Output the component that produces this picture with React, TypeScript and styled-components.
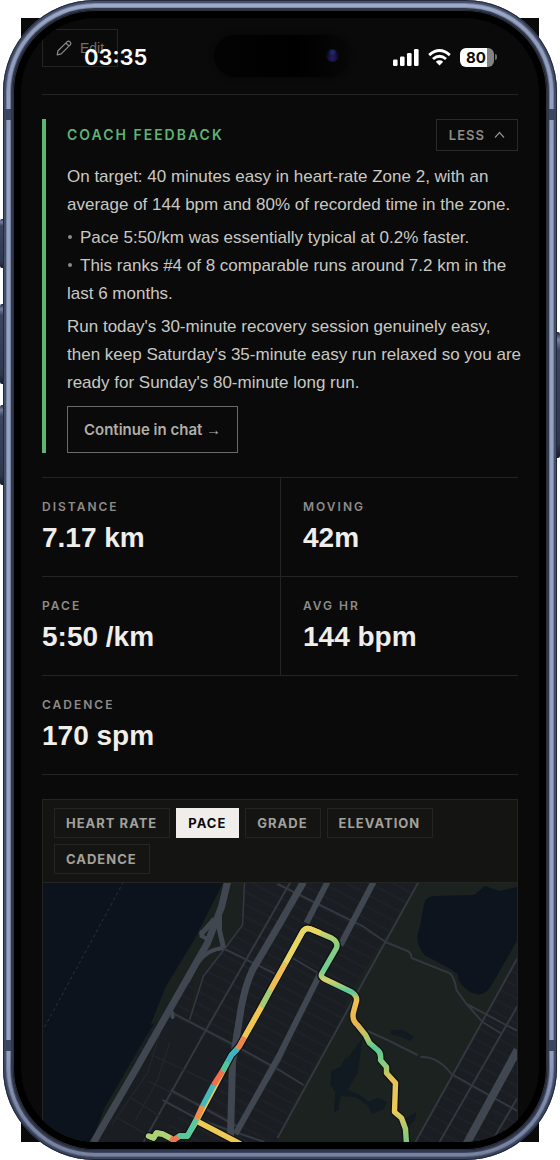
import React from "react";
import styled, { createGlobalStyle } from "styled-components";

const GlobalStyle = createGlobalStyle`
  *, *::before, *::after { box-sizing: border-box; }
  body {
    margin: 0;
    background: #ffffff;
    font-family: "Liberation Sans", Arial, sans-serif;
    -webkit-font-smoothing: antialiased;
  }
  button { font-family: inherit; cursor: pointer; }
  h2, p, ul, dl, dd { margin: 0; padding: 0; }
`;

const LABEL_FONT = `Inter, "Liberation Sans", sans-serif`;

const Stage = styled.div`
  position: relative;
  isolation: isolate;
  padding: 0 3px;

  &::before {
    content: "";
    position: absolute;
    z-index: -1;
    inset: 18px 21px;
    background: #0a0a0a;
  }
`;

const SideKey = styled.span<{ $side: "left" | "right"; $top: number; $length: number }>`
  position: absolute;
  z-index: -1;
  ${({ $side }) => $side}: 0;
  top: ${({ $top }) => $top}px;
  height: ${({ $length }) => $length}px;
  width: 6px;
  border-radius: 2px;
  background: linear-gradient(#20283a, #76819f 6%, #3a4560 14%, #2f394e 88%, #161c2a);
`;

const Device = styled.div`
  position: relative;
  padding: 10px;
  border-radius: 92px;
  background: linear-gradient(#8792b3, #6c7794 3%, #74809f 12%, #74809f 90%, #424c68 96%, #3d4660);
  box-shadow:
    inset 0 0 0 1px rgba(20, 26, 42, 0.7),
    inset 0 0 0 3px rgba(34, 43, 68, 0.6),
    inset 0 0 0 4px rgba(50, 60, 86, 0.3),
    inset 0 0 0 7px rgba(190, 203, 232, 0.45);
`;

const Bezel = styled.div`
  padding: 8px;
  border-radius: 82px;
  background: #000000;
  box-shadow:
    0 0 0 2px #30384f,
    inset 0 0 0 1px #2f3036;
`;

const AntennaBand = styled.span<{ $side: "left" | "right"; $end: "top" | "bottom" }>`
  position: absolute;
  ${({ $side }) => $side}: 1px;
  ${({ $end }) => $end}: 109px;
  width: 7px;
  height: 11px;
  background: #3c465f;
`;

const Screen = styled.main`
  position: relative;
  overflow: hidden;
  border-radius: 74px;
  background: #0a0a0a;
  padding: 11px 21px 0;
`;

const StatusBar = styled.header`
  position: absolute;
  inset: 0 0 auto 0;
  display: flex;
  align-items: center;
  justify-content: space-between;
  height: 78px;
  padding: 0 42px 0 63px;
  color: #ffffff;
`;

const Clock = styled.time`
  font-family: ${LABEL_FONT};
  font-size: 22px;
  font-weight: 600;
  line-height: 28px;
`;

const Island = styled.div`
  position: absolute;
  top: 17px;
  left: 50%;
  width: 136px;
  height: 42px;
  margin-left: -66px;
  border-radius: 21px;
  background: linear-gradient(90deg, #030303 10%, #000000 60%, #070708);
  box-shadow: 0 0 5px #070707;
`;

const Lens = styled.span`
  position: absolute;
  top: 14px;
  right: 11px;
  width: 13px;
  height: 13px;
  border-radius: 50%;
  background: radial-gradient(circle at 50% 25%, #1d2b66 0 10%, transparent 40%),
    radial-gradient(circle at 50% 70%, #26185c 0 12%, #0b0a22 55%, #050508);
`;

const Indicators = styled.div`
  display: flex;
  align-items: center;
  gap: 9px;
`;

const Battery = styled.span`
  display: flex;
  align-items: center;
  gap: 1px;

  &::after {
    content: "";
    width: 2px;
    height: 6px;
    border-radius: 0 2px 2px 0;
    background: #6c6c6c;
  }
`;

const BatteryLevel = styled.span`
  width: 34px;
  height: 19px;
  padding-right: 2px;
  border-radius: 6px;
  background: linear-gradient(90deg, #ffffff 80%, #828282 80%);
  color: #0a0a0a;
  font-family: ${LABEL_FONT};
  font-size: 15px;
  font-weight: 700;
  line-height: 19px;
  text-align: center;
`;

const Toolbar = styled.div`
  padding-bottom: 27px;
  border-bottom: 1px solid #242422;
`;

const EditButton = styled.button`
  display: flex;
  align-items: center;
  gap: 8px;
  height: 38px;
  padding: 0 13px;
  border: 1px solid #242422;
  background: transparent;
  color: #6f6f6c;
  font-size: 14px;
`;

const Coach = styled.section`
  margin: 24px 0;
  padding-left: 21px;
  border-left: 4px solid #5cb575;
  color: #c9c8c3;
  font-size: 17px;
  line-height: 28px;
`;

const CoachHeader = styled.div`
  display: flex;
  align-items: center;
  justify-content: space-between;
  margin-bottom: 12px;
`;

const CoachTitle = styled.h2`
  color: #5cb575;
  font-family: ${LABEL_FONT};
  font-size: 14px;
  font-weight: 600;
  line-height: 20px;
  letter-spacing: 2px;
`;

const LessButton = styled.button`
  display: flex;
  align-items: center;
  gap: 9px;
  height: 32px;
  padding: 0 12px;
  border: 1px solid #2a2a28;
  background: transparent;
  color: #8d8c88;
  font-family: ${LABEL_FONT};
  font-size: 13px;
  font-weight: 600;
  letter-spacing: 1px;
`;

const CoachText = styled.div`
  margin-right: -6px;
`;

const Findings = styled.ul`
  margin: 5px 0;
  list-style: none;
`;

const Finding = styled.li`
  &::before {
    content: "";
    display: inline-block;
    width: 4px;
    height: 4px;
    margin: 0 8px 4px 1px;
    border-radius: 50%;
    background: #8d8c88;
  }
`;

const ChatButton = styled.button`
  display: block;
  height: 47px;
  margin-top: 9px;
  padding: 0 16px;
  border: 1px solid #6b6a66;
  background: transparent;
  color: #b0aea8;
  font-family: ${LABEL_FONT};
  font-size: 15px;
  font-weight: 600;
`;

const Arrow = styled.span`
  font-family: "Liberation Sans", sans-serif;
`;

const Stats = styled.dl`
  display: grid;
  grid-template-columns: 1fr 1fr;
  border-top: 1px solid #242422;
`;

const Stat = styled.div<{ $divided?: boolean; $wide?: boolean }>`
  grid-column: ${({ $wide }) => ($wide ? "1 / -1" : "auto")};
  height: 99px;
  padding: 19px 0 0 ${({ $divided }) => ($divided ? 22 : 0)}px;
  border-left: ${({ $divided }) => ($divided ? "1px solid #242422" : "0")};
  border-bottom: 1px solid #242422;
`;

const StatLabel = styled.dt`
  color: #8d8c88;
  font-family: ${LABEL_FONT};
  font-size: 12px;
  font-weight: 600;
  line-height: 20px;
  letter-spacing: 2px;
`;

const StatValue = styled.dd`
  color: #efeeea;
  font-size: 28px;
  font-weight: 700;
  line-height: 42px;
`;

const MapCard = styled.section`
  margin-top: 24px;
  border: 1px solid #242422;
  border-bottom: 0;
  background: #141412;
`;

const Tabs = styled.div`
  display: flex;
  flex-wrap: wrap;
  gap: 6px;
  padding: 8px 11px;
  border-bottom: 1px solid #242422;
`;

const Tab = styled.button<{ $active?: boolean }>`
  height: 30px;
  padding: 0 12px 0 11px;
  border: 1px solid ${({ $active }) => ($active ? "#efeeea" : "#242422")};
  background: ${({ $active }) => ($active ? "#efeeea" : "transparent")};
  color: ${({ $active }) => ($active ? "#0a0a0a" : "#a3a19b")};
  font-family: ${LABEL_FONT};
  font-size: 13px;
  font-weight: 700;
  letter-spacing: 1px;
`;

const RouteMap = styled.svg`
  display: block;
  width: 100%;
  height: 259px;
  background: #1a1e23;
`;

const stats = [
  { label: "DISTANCE", value: "7.17 km" },
  { label: "MOVING", value: "42m" },
  { label: "PACE", value: "5:50 /km" },
  { label: "AVG HR", value: "144 bpm" },
  { label: "CADENCE", value: "170 spm" },
];

const metrics = ["HEART RATE", "PACE", "GRADE", "ELEVATION", "CADENCE"];

const ROUTE =
  "M149 1136 L154 1138 L157 1133 L163 1134 L174 1140 L180 1136 L188 1136 L197 1121 L199 1117 L232 1055 L240 1046 L303 932 Q306 927 311 929 L332 938 Q339 942 337 948 L322 974 Q321 977 325 979 L352 992 Q358 996 357 1001 L354 1012 Q352 1020 358 1025 L366 1035 L370 1043 L378 1050 Q382 1053 381 1060 L387 1067 L387 1073 L396 1083 L395 1112 L402 1118 L406 1129 L407 1144";

function Map() {
  return (
    <RouteMap viewBox="43 883 475 259" preserveAspectRatio="xMidYMid slice" role="img" aria-label="Run route coloured by pace">
      <defs>
        <pattern id="blocks" width="38" height="11" patternUnits="userSpaceOnUse" patternTransform="rotate(28)">
          <path d="M0 1H38" stroke="#22262c" strokeWidth="1" />
        </pattern>
        <linearGradient id="pace" gradientUnits="userSpaceOnUse" x1="0" y1="927" x2="0" y2="1142">
          <stop offset="0" stopColor="#e4d562" />
          <stop offset=".08" stopColor="#8ccf7f" />
          <stop offset=".2" stopColor="#6fcd92" />
          <stop offset=".25" stopColor="#d8d166" />
          <stop offset=".3" stopColor="#54cb9b" />
          <stop offset=".34" stopColor="#f0c04f" />
          <stop offset=".46" stopColor="#e6b552" />
          <stop offset=".52" stopColor="#a9ce70" />
          <stop offset=".56" stopColor="#5bc894" />
          <stop offset=".64" stopColor="#8bcc7c" />
          <stop offset=".7" stopColor="#e3c258" />
          <stop offset=".85" stopColor="#f0c957" />
          <stop offset="1" stopColor="#76ca84" />
        </linearGradient>
      </defs>
      <rect x="43" y="882" width="475" height="260" fill="url(#blocks)" />
      <path d="M43 882H224L196 940L173 992L157 1019L128 1068L92 1142H43Z" fill="#0c131c" />
      <path d="M224 882L194 941L166 987L151 1025L160 1020L196 969L190 1021L202 975L240 932L244 882Z" fill="#1a211f" />
      <path d="M130 1065L105 1108L92 1142L143 1072Z" fill="#1a211f" />
      <path d="M160 1024L190 1024L229 1046L200 1098L150 1142H100Z" fill="#1a1e23" />
      <path d="M124 882L44 1029" stroke="#343a42" strokeWidth=".8" strokeDasharray="3 3" fill="none" />
      <path d="M419 882H518V961L416 1142H276L303 1085L347 1012L346 1000Z" fill="#1b221f" />
      <path d="M436 896L475 895L485 886L500 891L518 887V940L492 985Q484 1000 469 991Q459 984 458 974L451 969L425 955Q414 941 420 929L424 907Q425 896 436 896Z" fill="#0d141d" />
      <path d="M363 1038L352 1053L346 1061L348 1054L341 1067L332 1071L331 1085L336 1092L334 1112L339 1110L341 1096L356 1097L367 1104L373 1114L384 1109L388 1102L378 1098L369 1102L360 1095L348 1090L358 1073Z" fill="#111921" />
      <path d="M392 1030L403 1030L414 1036L411 1041L402 1037L391 1034ZM407 1118L417 1112L415 1120L408 1127Z" fill="#111921" />
      <path d="M518 958L416 1142H518Z" fill="#1a1e23" />
      <path d="M518 958L416 1142H518Z" fill="url(#blocks)" />

      <g fill="none" stroke="#33373f" strokeWidth="1.6">
        <path d="M291 882L207 1029L144 1142" strokeWidth="2" />
        <path d="M245 882L243 925L225 949L204 976L190 1020" />
        <path d="M419 882L347 1012L278 1138" strokeWidth="2" />
        <path d="M278 884L363 926L386 942M225 949L280 976M293 958L320 974M175 1014L229 1042L280 1070L304 1085" strokeWidth="2" />
        <path d="M412 958L450 973Q455 977 457 990L467 1004L518 1031M467 1004L483 1022L501 1033M386 942L408 951Q412 953 412 958" strokeWidth="2" />
        <path d="M368 1031L388 1040L418 1055M421 1057Q438 1056 452 1074L518 1111" strokeWidth="2" />
        <path d="M518 958L482 1023L416 1142M518 1006L440 1142M518 1098L492 1142" strokeWidth="2" />
        <path d="M171 1090L237 1126M163 1100L200 1120L265 1142" strokeWidth="2" />
        <path d="M238 1132L280 1060L304 1007" strokeWidth="3" />
      </g>
      <g fill="none" stroke="#24282e" strokeWidth="1.2">
        <path d="M161 1031L148 1073L112 1125M170 1043L158 1080L136 1120M148 1081L195 1104M132 1098L160 1116M118 1118L148 1135M155 1056L210 1082" />
      </g>

      <g fill="none" stroke="#414751">
        <path d="M228 882L222 907L208 943L171 1008L137 1068L93 1144" strokeWidth="7" />
        <path d="M220 915L220 930L224 948" strokeWidth="5" />
        <path d="M224 948Q208 949 198 963L188 982" strokeWidth="4" />
        <path d="M215 919L201 935" strokeWidth="5" />
        <path d="M202 932V936L206 938M173 1013V1017" strokeWidth="4" strokeLinecap="round" />
        <path d="M304 882L280 924L253 970Q246 985 242 1006L233 1062L231 1136" strokeWidth="7" />
        <path d="M328 882L307 923M374 882L341 945M320 975L280 1055L236 1134" strokeWidth="6" />
        <path d="M518 1050L467 1144" strokeWidth="8" />
      </g>

      <g fill="none" stroke="#101418" strokeWidth="8" strokeLinejoin="round" strokeLinecap="round">
        <path d={ROUTE} />
        <path d="M199 1122L241 1144" />
      </g>
      <g fill="none" strokeWidth="5.4" strokeLinejoin="round">
        <path d={ROUTE} stroke="url(#pace)" />
        <path d="M149 1136L154 1138L157 1133L163 1134L171 1138" stroke="#aed273" strokeLinecap="round" />
        <path d="M199 1122L241 1144" stroke="#edc955" />
        <path d="M171 1138L174 1140L179 1137" stroke="#ef7651" />
        <path d="M179 1137L180 1136L188 1136L197 1119" stroke="#58c99e" />
        <path d="M197 1119L203 1106" stroke="#ef8a4d" />
        <path d="M203 1106L214 1085" stroke="#45b8bb" />
        <path d="M214 1085L223 1071" stroke="#ef704b" />
        <path d="M223 1071L228 1062" stroke="#50c79b" />
        <path d="M228 1062L232 1055L238 1049" stroke="#3fb3bf" />
        <path d="M238 1049L240 1046L245 1037" stroke="#ef844b" />
        <path d="M245 1037L262 1007" stroke="#f0c653" />
        <path d="M262 1007L271 990" stroke="#a3cd75" />
        <path d="M271 990L286 963" stroke="#f2bd50" />
        <path d="M286 963L303 932Q306 927 311 929L321 933" stroke="#e8d660" />
      </g>
    </RouteMap>
  );
}

export default function App() {
  return (
    <>
      <GlobalStyle />
      <Stage>
        <SideKey $side="left" $top={219} $length={49} />
        <SideKey $side="left" $top={304} $length={80} />
        <SideKey $side="left" $top={405} $length={80} />
        <SideKey $side="right" $top={332} $length={126} />
        <Device>
          <AntennaBand $side="left" $end="top" />
          <AntennaBand $side="right" $end="top" />
          <AntennaBand $side="left" $end="bottom" />
          <AntennaBand $side="right" $end="bottom" />
          <Bezel>
            <Screen>
              <Toolbar>
                <EditButton type="button">
                  <svg width="16" height="16" viewBox="0 0 16 16" fill="none" stroke="#8d8c88" strokeWidth="1.2" strokeLinejoin="round">
                    <path d="M1.2 14.8L2 10.7L11.3 1.6Q12.7.6 14 1.9Q15.4 3.3 14.4 4.7L5.2 13.9ZM9.9 3L13 6.1" />
                  </svg>
                  Edit
                </EditButton>
              </Toolbar>

              <Coach>
                <CoachHeader>
                  <CoachTitle>COACH FEEDBACK</CoachTitle>
                  <LessButton type="button" aria-expanded="true">
                    LESS
                    <svg width="11" height="8" viewBox="0 0 11 8" fill="none" stroke="currentColor" strokeWidth="1.2">
                      <path d="M1 6.5L5.5 1.5L10 6.5" />
                    </svg>
                  </LessButton>
                </CoachHeader>
                <CoachText>
                  <p>On target: 40 minutes easy in heart-rate Zone 2, with an average of 144 bpm and 80% of recorded time in the zone.</p>
                  <Findings>
                    <Finding>Pace 5:50/km was essentially typical at 0.2% faster.</Finding>
                    <Finding>This ranks #4 of 8 comparable runs around 7.2 km in the last 6 months.</Finding>
                  </Findings>
                  <p>
                    Run today's 30-minute recovery session genuinely easy, then keep Saturday's 35-minute easy run relaxed so you
                    are ready for Sunday's 80-minute long run.
                  </p>
                </CoachText>
                <ChatButton type="button">
                  Continue in chat <Arrow>→</Arrow>
                </ChatButton>
              </Coach>

              <Stats>
                {stats.map(({ label, value }, i) => (
                  <Stat key={label} $divided={i % 2 === 1} $wide={i === stats.length - 1}>
                    <StatLabel>{label}</StatLabel>
                    <StatValue>{value}</StatValue>
                  </Stat>
                ))}
              </Stats>

              <MapCard>
                <Tabs>
                  {metrics.map((metric) => (
                    <Tab key={metric} type="button" $active={metric === "PACE"} aria-pressed={metric === "PACE"}>
                      {metric}
                    </Tab>
                  ))}
                </Tabs>
                <Map />
              </MapCard>

              <StatusBar>
                <Clock>03:35</Clock>
                <Island>
                  <Lens />
                </Island>
                <Indicators>
                  <svg width="26" height="17" viewBox="0 0 26 17" fill="#fff" aria-label="Signal">
                    <rect x="0" y="10.5" width="4.6" height="6.5" rx="1.3" />
                    <rect x="7" y="7.5" width="4.6" height="9.5" rx="1.3" />
                    <rect x="14" y="4" width="4.6" height="13" rx="1.3" />
                    <rect x="21" y="0" width="4.6" height="17" rx="1.3" />
                  </svg>
                  <svg width="23" height="17" viewBox="0 0 23 17" fill="none" stroke="#fff" strokeWidth="2.9" aria-label="Wi-Fi">
                    <path d="M1.2 6.1Q11.5-3 21.8 6.1M5 10Q11.5 4.3 18 10" />
                    <path d="M11.5 16.5L7.8 12.7Q11.5 9.8 15.2 12.7Z" fill="#fff" stroke="none" />
                  </svg>
                  <Battery>
                    <BatteryLevel>80</BatteryLevel>
                  </Battery>
                </Indicators>
              </StatusBar>
            </Screen>
          </Bezel>
        </Device>
      </Stage>
    </>
  );
}
